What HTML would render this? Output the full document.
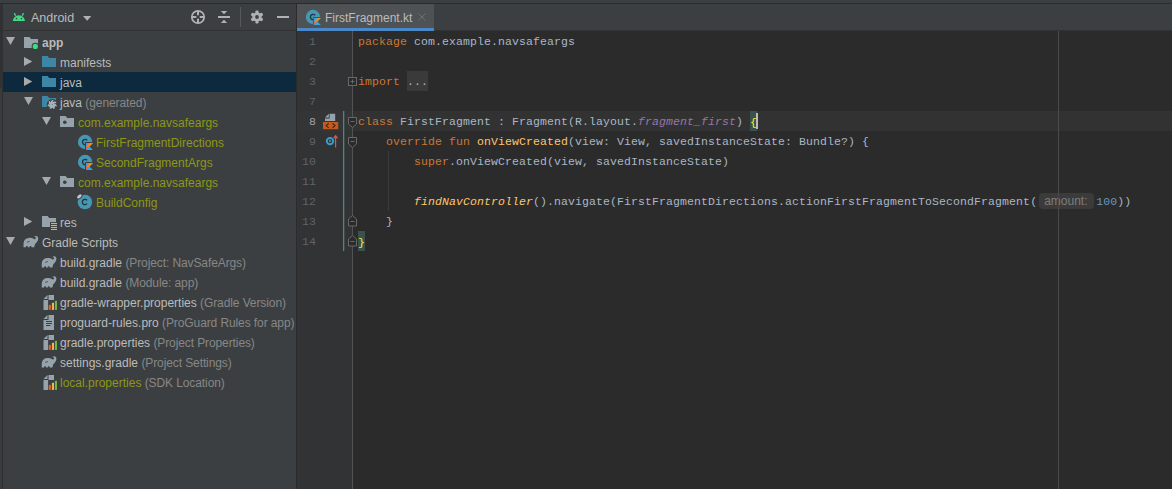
<!DOCTYPE html>
<html><head><meta charset="utf-8">
<style>
*{margin:0;padding:0;box-sizing:border-box}
html,body{width:1172px;height:489px;overflow:hidden;background:#3C3F41}
body{position:relative;font-family:"Liberation Sans",sans-serif;font-size:12px;color:#BBBBBB}
.a{position:absolute}
#strip{left:0;top:4px;width:3px;height:84px;background:#2F3133}
#strip2{left:0;top:88px;width:2px;height:401px;background:#393B3D}
#strip3{left:2px;top:88px;width:1px;height:401px;background:#2E2F30}
#topline{left:0;top:3px;width:1172px;height:1px;background:#2B2B2B}
#hdrline{left:3px;top:30px;width:293px;height:1px;background:#323232}
#divider{left:296px;top:4px;width:1px;height:485px;background:#2B2B2B}
#edhdr{left:297px;top:4px;width:875px;height:27px;background:#3C3F41;border-bottom:1px solid #323232}
#tab{left:297px;top:4px;width:137px;height:27px;background:#4E5254}
#tabline{left:297px;top:28px;width:137px;height:3px;background:#4A88C7}
#gutter{left:297px;top:31px;width:56px;height:458px;background:#313335}
#editor{left:353px;top:31px;width:819px;height:458px;background:#2B2B2B}
#curg{left:297px;top:111px;width:56px;height:20px;background:#333537}
#cure{left:353px;top:111px;width:819px;height:20px;background:#323232}
#sel{left:3px;top:72px;width:293px;height:20px;background:#0D293E}
.t{position:absolute;height:20px;line-height:20px;white-space:pre;top:1px}
.row{position:absolute;left:0;height:20px;width:296px}
.g{color:#878787;letter-spacing:-0.1px}
.ol{color:#8D9714}
.code{position:absolute;margin-top:1px;left:358px;height:20px;line-height:20px;white-space:pre;font-family:"Liberation Mono",monospace;font-size:11.5px;letter-spacing:0.1px;color:#A9B7C6}
.ln{position:absolute;margin-top:1px;left:297px;width:19px;text-align:right;height:20px;line-height:20px;white-space:pre;font-family:"Liberation Mono",monospace;font-size:11.5px;letter-spacing:0.1px;color:#606366}
.k{color:#CC7832}
.fn{color:#FFC66D}
.it{font-style:italic}
.pu{color:#9876AA}
.num{color:#6897BB}
.fold{display:inline-block;vertical-align:top;height:20px;margin-top:-1px;line-height:21px;background:#3A3A3A}
.br{display:inline-block;vertical-align:top;height:20px;margin-top:-1px;line-height:23px;background:#3B514D;color:#FFEF28}
.hint{display:inline-block;vertical-align:top;margin:1px 2px 0 2px;width:55px;height:16px;line-height:16px;border-radius:4px;background:#3B3B3B;color:#7D7D7D;font-family:"Liberation Sans",sans-serif;font-size:12px;letter-spacing:0;padding-left:5px}
</style></head><body>
<div class="a" id="strip"></div>
<div class="a" id="strip2"></div>
<div class="a" id="strip3"></div>
<div class="a" id="topline"></div>
<div class="a" id="hdrline"></div>
<div class="a" id="edhdr"></div>
<div class="a" id="tab"></div>
<div class="a" id="tabline"></div>
<div class="a" id="divider"></div>
<div class="a" id="gutter"></div>
<div class="a" id="editor"></div>
<div class="a" id="curg"></div>
<div class="a" id="cure"></div>
<div class="a" id="sel"></div>

<!-- header text -->
<div class="t" style="left:31px;top:8px;font-size:12.5px">Android</div>
<div class="t" style="left:325px;top:8px">FirstFragment.kt</div>

<!-- tree -->
<div class="row" style="top:32px"><span class="t" style="left:42px;font-weight:bold">app</span></div>
<div class="row" style="top:52px"><span class="t" style="left:60px">manifests</span></div>
<div class="row" style="top:72px"><span class="t" style="left:60px">java</span></div>
<div class="row" style="top:92px"><span class="t" style="left:60px">java <span class="g">(generated)</span></span></div>
<div class="row" style="top:112px"><span class="t ol" style="left:78px">com.example.navsafeargs</span></div>
<div class="row" style="top:132px"><span class="t ol" style="left:96px">FirstFragmentDirections</span></div>
<div class="row" style="top:152px"><span class="t ol" style="left:96px">SecondFragmentArgs</span></div>
<div class="row" style="top:172px"><span class="t ol" style="left:78px">com.example.navsafeargs</span></div>
<div class="row" style="top:192px"><span class="t ol" style="left:96px">BuildConfig</span></div>
<div class="row" style="top:212px"><span class="t" style="left:60px">res</span></div>
<div class="row" style="top:232px"><span class="t" style="left:42px">Gradle Scripts</span></div>
<div class="row" style="top:252px"><span class="t" style="left:60px">build.gradle <span class="g">(Project: NavSafeArgs)</span></span></div>
<div class="row" style="top:272px"><span class="t" style="left:60px">build.gradle <span class="g">(Module: app)</span></span></div>
<div class="row" style="top:292px"><span class="t" style="left:60px">gradle-wrapper.properties <span class="g">(Gradle Version)</span></span></div>
<div class="row" style="top:312px"><span class="t" style="left:60px">proguard-rules.pro <span class="g">(ProGuard Rules for app)</span></span></div>
<div class="row" style="top:332px"><span class="t" style="left:60px">gradle.properties <span class="g">(Project Properties)</span></span></div>
<div class="row" style="top:352px"><span class="t" style="left:60px">settings.gradle <span class="g">(Project Settings)</span></span></div>
<div class="row" style="top:372px"><span class="t" style="left:60px"><span class="ol">local.properties</span> <span class="g">(SDK Location)</span></span></div>

<!-- line numbers -->
<div class="ln" style="top:31px">1</div>
<div class="ln" style="top:51px">2</div>
<div class="ln" style="top:71px">3</div>
<div class="ln" style="top:91px">7</div>
<div class="ln" style="top:111px;color:#A4A3A3">8</div>
<div class="ln" style="top:131px">9</div>
<div class="ln" style="top:151px">10</div>
<div class="ln" style="top:171px">11</div>
<div class="ln" style="top:191px">12</div>
<div class="ln" style="top:211px">13</div>
<div class="ln" style="top:231px">14</div>

<!-- code -->
<div class="code" style="top:31px"><span class="k">package</span> com.example.navsafeargs</div>
<div class="code" style="top:71px"><span class="k">import</span> <span class="fold">...</span></div>
<div class="code" style="top:111px"><span class="k">class</span> FirstFragment : Fragment(R.layout.<span class="it pu">fragment_first</span>) <span class="br">{</span></div>
<div class="code" style="top:131px">    <span class="k">override fun</span> <span class="fn">onViewCreated</span>(view: View, savedInstanceState: Bundle?) {</div>
<div class="code" style="top:151px">        <span class="k">super</span>.onViewCreated(view, savedInstanceState)</div>
<div class="code" style="top:191px">        <span class="fn it">findNavController</span>().navigate(FirstFragmentDirections.actionFirstFragmentToSecondFragment(<span class="hint">amount:</span><span class="num">100</span>))</div>
<div class="code" style="top:211px">    }</div>
<div class="code" style="top:231px"><span class="br">}</span></div>

<!-- overlay svg -->
<svg class="a" style="left:0;top:0" width="1172" height="489" viewBox="0 0 1172 489">
<defs>
<symbol id="kt" overflow="visible">
 <circle cx="0" cy="0" r="7.2" fill="#4697B3"/>
 <path d="M2.1,-1.6 A2.6,2.6 0 1 0 2.1,1.6" fill="none" stroke="#243239" stroke-width="1.3"/>
</symbol>
<symbol id="ktbadge" overflow="visible">
 <polygon points="0.9,1 7.9,1 4.4,4.5 7.9,8 0.9,8" fill="#27AAE1"/>
 <polygon points="4.4,1 7.9,1 0.9,8 0.9,4.5" fill="url(#kgrad)"/>
</symbol>
<linearGradient id="kgrad" x1="1" y1="0" x2="0" y2="1">
 <stop offset="0.45" stop-color="#F88909"/>
 <stop offset="1" stop-color="#E44895"/>
</linearGradient>
<symbol id="eleph" overflow="visible">
 <path d="M0.2,12 L0.3,7.8 C0.5,5 2.2,2.8 5.5,2.6 C7.5,2.5 9,2.5 10,3.3 C10.5,3.8 11,4.2 11.6,3.9 C12.6,3.4 12.8,2.4 12.3,1.9 C11.9,1.6 11.4,1.9 11,1.7 C11.6,0.3 14.9,0.3 14.9,3.2 C14.9,5.8 13,7.5 11.8,8.8 L10.8,12 L8.2,12 C8.2,11.2 7.8,10.8 7.2,10.8 C6.6,10.8 6.2,11.2 6.2,12 L4.6,12 C4.6,11.2 4.2,10.8 3.6,10.8 C3,10.8 2.6,11.2 2.6,12 Z" fill="#97A3AB"/>
 <path d="M3.6,6.8 C4.6,6.9 5.6,6.5 6.4,5.8" fill="none" stroke="#3C3F41" stroke-width="0.8"/>
</symbol>
<symbol id="props" overflow="visible">
 <path d="M5,0 H10.5 V15 H0 V5 H5 Z" fill="#97A3AB"/>
 <polygon points="0,4 4,0 4,4" fill="#97A3AB"/>
 <rect x="4.6" y="5" width="9" height="11" fill="#3C3F41"/>
 <rect x="5.3" y="9.9" width="2.1" height="5" fill="#E5622B"/>
 <rect x="8.4" y="7.8" width="2.1" height="7.1" fill="#F0B84B"/>
 <rect x="11.4" y="5.8" width="2.1" height="9.1" fill="#6CB744"/>
</symbol>
</defs>
<!-- header icons -->
<g fill="#3DDC84">
 <path d="M12.9,21.1 A6,5.9 0 0 1 24.9,21.1 Z"/>
 <line x1="15.6" y1="15.8" x2="14.3" y2="13.1" stroke="#3DDC84" stroke-width="1.3"/>
 <line x1="22.2" y1="15.8" x2="23.5" y2="13.1" stroke="#3DDC84" stroke-width="1.3"/>
</g>
<circle cx="16.5" cy="18.6" r="0.8" fill="#3C3F41"/>
<circle cx="21.4" cy="18.6" r="0.8" fill="#3C3F41"/>
<polygon points="83,16 91.3,16 87.15,20.8" fill="#AFB1B3"/>
<g fill="none" stroke="#AFB1B3">
 <circle cx="198" cy="17" r="6.2" stroke-width="1.7"/>
 <path d="M198,10.8 V15.3 M198,18.7 V23.2 M191.8,17 H196.3 M199.7,17 H204.2" stroke-width="2"/>
</g>
<g fill="#AFB1B3">
 <rect x="218" y="16" width="12" height="2"/>
 <polygon points="220.8,11 227.2,11 224,14.2"/>
 <polygon points="224,19.8 220.8,23.1 227.2,23.1"/>
 <rect x="277" y="16" width="12" height="2"/>
 <g transform="translate(257,17)">
  <circle r="4.7"/>
  <rect x="-1.5" y="-6.4" width="3" height="12.8" rx="0.6"/>
  <rect x="-1.5" y="-6.4" width="3" height="12.8" rx="0.6" transform="rotate(60)"/>
  <rect x="-1.5" y="-6.4" width="3" height="12.8" rx="0.6" transform="rotate(120)"/>
  <circle r="1.9" fill="#3C3F41"/>
 </g>
</g>
<rect x="240" y="7" width="1" height="20" fill="#56595B"/>
<!-- tab icon -->
<g transform="translate(313,17)">
 <use href="#kt"/>
 <rect x="-0.1" y="0" width="9" height="9" fill="#4E5254"/>
 <use href="#ktbadge"/>
</g>
<path d="M418.5,13.5 L425.5,20.5 M425.5,13.5 L418.5,20.5" stroke="#6D7072" stroke-width="1"/>

<!-- tree triangles -->
<g fill="#A7A9AB">
 <polygon points="6,37 15,37 10.5,45"/>
 <polygon points="24,57 24,66 32.3,61.5"/>
 <polygon points="24,77 24,86 32.3,81.5"/>
 <polygon points="24,97 33,97 28.5,105"/>
 <polygon points="42,117 51,117 46.5,125"/>
 <polygon points="42,177 51,177 46.5,185"/>
 <polygon points="24,217 24,226 32.3,221.5"/>
 <polygon points="6,237 15,237 10.5,245"/>
</g>
<!-- app module folder -->
<path d="M24,37 h5.5 l1.5,2 H38 V48 H24 Z" fill="#97A3AB"/>
<circle cx="35.3" cy="46.4" r="3.7" fill="#3C3F41"/>
<circle cx="35.3" cy="46.4" r="2.6" fill="#3DDC84"/>
<!-- blue folders -->
<g fill="#3E86A6">
 <path d="M42,56 h5.6 l1.6,2.1 H56 V67 H42 Z"/>
 <path d="M42,76 h5.6 l1.6,2.1 H56 V87 H42 Z"/>
 <path d="M42,96 h5.6 l1.6,2.1 H56 V107 H42 Z"/>
</g>
<circle cx="52.3" cy="104.6" r="5.6" fill="#3C3F41"/>
<g transform="translate(52.3,104.6)"><path d="M1.10,0.00 Q2.72,1.27 1.37,3.76 M0.69,0.86 Q0.70,2.92 -2.09,3.41 M-0.24,1.07 Q-1.84,2.37 -3.97,0.50 M-0.99,0.48 Q-3.00,0.04 -2.86,-2.79 M-0.99,-0.48 Q-1.90,-2.32 0.40,-3.98 M-0.24,-1.07 Q0.63,-2.93 3.36,-2.17 M0.69,-0.86 Q2.69,-1.34 3.79,1.27" fill="none" stroke="#A9B4BC" stroke-width="1.4" stroke-linecap="round"/></g>
<!-- package icons -->
<g fill="#97A3AB">
 <path d="M60,116 h5.6 l1.6,2.1 H74 V127 H60 Z"/>
 <path d="M60,176 h5.6 l1.6,2.1 H74 V187 H60 Z"/>
</g>
<circle cx="64.8" cy="122.3" r="1.8" fill="#3C3F41"/>
<circle cx="64.8" cy="182.3" r="1.8" fill="#3C3F41"/>
<!-- kotlin class icons -->
<g transform="translate(85.1,142)">
 <use href="#kt"/>
 <rect x="-0.1" y="0" width="9" height="9" fill="#3C3F41"/>
 <use href="#ktbadge"/>
</g>
<g transform="translate(85.1,162)">
 <use href="#kt"/>
 <rect x="-0.1" y="0" width="9" height="9" fill="#3C3F41"/>
 <use href="#ktbadge"/>
</g>
<!-- BuildConfig icon -->
<g transform="translate(84.9,202)">
 <circle r="7.25" fill="#4697B3"/>
 <path d="M2.1,-1.6 A2.6,2.6 0 1 0 2.1,1.6" fill="none" stroke="#243239" stroke-width="1.3"/>
 <ellipse cx="-5.5" cy="-5.6" rx="3.6" ry="2.4" transform="rotate(-40 -5.5 -5.6)" fill="#3C3F41"/>
 <ellipse cx="-5.5" cy="-5.6" rx="2.7" ry="1.5" transform="rotate(-40 -5.5 -5.6)" fill="#C4C6C8"/>
</g>
<!-- res folder -->
<path d="M42,216 h5.6 l1.6,2.1 H56 V227 H42 Z" fill="#97A3AB"/>
<rect x="50" y="222" width="8" height="9" fill="#3C3F41"/>
<g fill="#E9AE48">
 <rect x="51" y="222.9" width="6" height="1.1"/>
 <rect x="51" y="224.9" width="6" height="1.1"/>
 <rect x="51" y="226.9" width="6" height="1.1"/>
 <rect x="51" y="228.9" width="6" height="1.1"/>
</g>
<!-- gradle icons -->
<use href="#eleph" x="23.3" y="235.3"/>
<use href="#eleph" x="41.5" y="255.5"/>
<use href="#eleph" x="41.5" y="275.5"/>
<use href="#eleph" x="41.5" y="355.5"/>
<use href="#props" x="43.5" y="295"/>
<use href="#props" x="43.5" y="335"/>
<use href="#props" x="43.5" y="375"/>
<!-- proguard doc -->
<path d="M48.5,315 H54 V330 H43.5 V320 H48.5 Z" fill="#97A3AB"/><polygon points="43.5,319 47.5,315 47.5,319" fill="#97A3AB"/>
<g fill="#3C3F41">
 <rect x="46" y="321" width="6" height="1"/>
 <rect x="46" y="323" width="6" height="1"/>
 <rect x="46" y="325" width="4.5" height="1"/>
</g>

<!-- gutter -->
<rect x="343" y="111" width="1.3" height="140" fill="#52857C"/>
<rect x="352" y="31" width="1" height="458" fill="#515354"/>
<rect x="388" y="151" width="1" height="60" fill="#3B3B3B"/>
<!-- gutter icons line 8 -->
<path d="M329.6,113.7 H335.2 V121 H325 V118.4 H329.6 Z" fill="#97A3AB"/><polygon points="325,117.6 328.8,113.8 328.8,117.6" fill="#97A3AB"/>
<rect x="323" y="122" width="15.2" height="7.2" fill="#C45A1C"/>
<path d="M328.7,123.4 L326.2,125.6 L328.7,127.8 M332.5,123.4 L335,125.6 L332.5,127.8" fill="none" stroke="#3A2418" stroke-width="1.1"/>
<!-- line 9 -->
<circle cx="330" cy="141.1" r="3.2" fill="none" stroke="#3A9AC9" stroke-width="2"/>
<circle cx="330" cy="141.1" r="1" fill="#3A9AC9"/>
<path d="M335.6,147.5 V136.5" stroke="#D45753" stroke-width="1.2"/>
<polygon points="335.6,134.8 332.8,138.2 338.4,138.2" fill="#D45753"/>
<!-- fold markers -->
<g fill="#2B2B2B" stroke="#67696B" stroke-width="1">
 <rect x="348.5" y="77.5" width="8" height="8"/>
 <polygon points="348.5,117.5 356.5,117.5 356.5,124 352.5,127.5 348.5,124"/>
 <polygon points="348.5,137.5 356.5,137.5 356.5,144 352.5,147.5 348.5,144"/>
 <polygon points="348.5,226 356.5,226 356.5,219 352.5,215.5 348.5,219"/>
 <polygon points="348.5,246 356.5,246 356.5,239 352.5,235.5 348.5,239"/>
</g>
<g stroke="#67696B" stroke-width="1">
 <path d="M350.5,81.5 H354.5 M352.5,79.5 V83.5"/>
 <path d="M350.5,121.5 H354.5"/>
 <path d="M350.5,141.5 H354.5"/>
 <path d="M350.5,221.5 H354.5"/>
 <path d="M350.5,241.5 H354.5"/>
</g>
<!-- caret & margin -->
<rect x="756" y="113" width="2" height="16" fill="#BBBBBB"/>
<rect x="1058" y="31" width="1" height="458" fill="#4A4A4A"/>
</svg>
</body></html>
